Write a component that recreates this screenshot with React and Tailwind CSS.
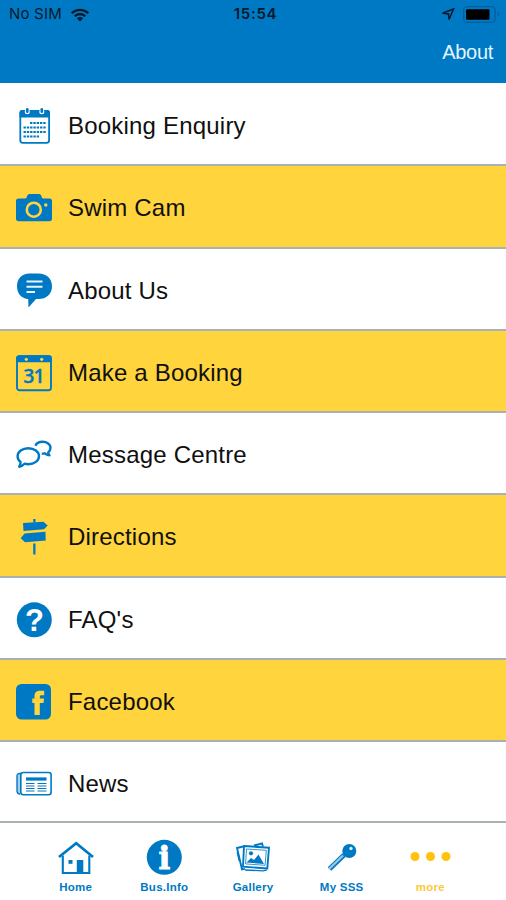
import React from "react";

const BLUE = "#0079c4";

const CalendarIcon = () => (
  <svg width="36" height="36" viewBox="0 0 36 36">
    <rect x="4.3" y="3" width="28.8" height="31.800" rx="2.500" fill="#fff" stroke={BLUE} strokeWidth="1.800" />
    <path d="M3.500 9.500V4.500a2.500 2.500 0 0 1 2.500-2.500h25.500a2.500 2.500 0 0 1 2.500 2.500v5z" fill={BLUE} />
    {[11.300, 25.800].map((x) => (
      <g key={x}>
        <circle cx={x} cy="3.800" r="2.500" fill="#fff" />
        <rect x={x - 1.300} y="0" width="2.600" height="5" rx="1.300" fill={BLUE} />
      </g>
    ))}
    <g stroke={BLUE} strokeWidth="2.200" strokeDasharray="2.400 0.900">
      <path d="M14 15h16" />
      <path d="M7.500 19.500h22.500" />
      <path d="M7.500 24h22.500" />
      <path d="M7.500 28.500h16" />
    </g>
  </svg>
);

const CameraIcon = () => (
  <svg width="36" height="36" viewBox="0 0 36 36" fill={BLUE}>
    <path d="M2.500 8.500H9q1.500 0 1.800-1.500l.5-1.500Q11.800 4 13.500 4h9.500q1.700 0 2.200 1.500l.5 1.500q.3 1.500 1.800 1.500h6Q36 8.500 36 11v17.500q0 2.800-2.500 2.800h-31Q0 31.300 0 28.500V11Q0 8.500 2.500 8.500z" />
    <circle cx="17.800" cy="19.700" r="7" fill="none" stroke="#ffd43c" strokeWidth="2.600" />
    <circle cx="29.800" cy="15" r="1.700" fill="#ffd43c" />
  </svg>
);

const BubbleIcon = () => (
  <svg width="36" height="36" viewBox="0 0 36 36">
    <path
      d="M13.500 .500h9C30.500.500 36 5.500 36 13.200S30.500 26 22.500 26H20L12.500 34.500l-.3-8.500C5.500 25.500 1 20.500 1 13.200 1 5.500 6 .5 13.500.5z"
      fill={BLUE}
    />
    <path d="M10.500 8.500h16M10.500 13.700h16M10.500 19h8.500" stroke="#e8f4fc" strokeWidth="2" />
  </svg>
);

const BookingIcon = () => (
  <svg width="36" height="36" viewBox="0 0 36 36" className="overflow-visible">
    <rect x="1" y="1.200" width="34" height="34" rx="2.500" fill="none" stroke={BLUE} strokeWidth="1.900" />
    <path d="M.2 7.200V3Q.2.300 3 .300h30Q35.800.300 35.800 3v4.200z" fill={BLUE} />
    <circle cx="10.300" cy="4.300" r="1.600" fill="#ffd43c" />
    <circle cx="25.700" cy="4.300" r="1.600" fill="#ffd43c" />
    <text
      x="17.500"
      y="28"
      textAnchor="middle"
      fill={BLUE}
      stroke={BLUE}
      strokeWidth="0.300"
      className="font-['Open_Sans',sans-serif] text-[19.500px] font-semibold tracking-[-1px]"
    >
      31
    </text>
  </svg>
);

const ChatIcon = () => (
  <svg width="36" height="36" viewBox="0 0 36 36" fill="none" stroke={BLUE} strokeWidth="2.400" strokeLinejoin="round">
    <path d="M12.300 11.200c6 0 10.700 3.600 10.700 8s-4.700 8-10.700 8c-1.400 0-2.600-.2-3.800-.5-1.300 1.500-3 2.700-5.300 3 .9-1.400 1.500-3.300 1.300-4.700C2.600 23.500 1.600 21.500 1.600 19.200c0-4.400 4.700-8 10.700-8z" />
    <path d="M19.500 8.700c1-2.500 3.700-3.900 7-3.900 4.500 0 8 2.500 8 6 0 1.900-.9 3.500-2.300 4.600.1 1.200.5 2 1.300 3-2-.2-3.500-.9-4.600-2.100-1 .3-2 .4-3.200.3" />
  </svg>
);

const SignpostIcon = () => (
  <svg width="36" height="36" viewBox="0 0 36 36" fill={BLUE}>
    <path d="M17.200 0h2.300v3.500h-2.300zM17.200 24.500h2.300V35.500h-2.300z" />
    <path d="M7 4l20.500-1.200 4.200 3.700L28 10.300 7.500 12z" />
    <path d="M29.500 12.800l.2 8.700L9 23.300l-4.300-4 3.800-4.800z" />
  </svg>
);

const QuestionIcon = () => (
  <svg width="36" height="36" viewBox="0 0 36 36" className="overflow-visible">
    <circle cx="18.300" cy="17.800" r="17.500" fill={BLUE} />
    <text
      x="18.500"
      y="28.800"
      textAnchor="middle"
      fill="#fff"
      className="font-['Liberation_Sans',sans-serif] text-[31px] font-bold"
    >
      ?
    </text>
  </svg>
);

const FacebookIcon = () => (
  <svg width="36" height="36" viewBox="0 0 36 36">
    <rect y="0" width="35" height="35.500" rx="5.500" fill={BLUE} />
    <path
      d="M18.500 31V19h-2.200v-4.500h2.200v-2.200c0-4 2-5.600 5.700-5.600h4v4.500h-2.500c-1.500 0-1.900.6-1.900 1.900v1.400h4.300l-.6 4.500h-3.700v12z"
      fill="#ffd43c"
    />
  </svg>
);

const NewsIcon = () => (
  <svg width="36" height="36" viewBox="0 0 36 36" fill="none" stroke={BLUE}>
    <path d="M5 7.500H3.500Q1 7.500 1 10v14.500q0 3.500 3 3.500" fill="#a9cdea" strokeWidth="1.400" />
    <rect x="4.800" y="6.500" width="30.300" height="22.300" rx="2.500" fill="#fff" strokeWidth="1.600" />
    <path d="M10 13h20.500" strokeWidth="3.200" />
    <path
      d="M10 17.500h8.500M21.500 17.500h9M10 20h8.500M21.500 20h9M10 22.500h8.500M21.500 22.500h9M10 25h8.500M21.500 25h9"
      strokeWidth="1"
    />
  </svg>
);

const HomeIcon = () => (
  <svg width="36" height="36" viewBox="0 0 36 36" fill="none" stroke={BLUE}>
    <path d="M4.800 15.500v17.500h26.500v-17.500" strokeWidth="2.100" />
    <path d="M1 17L18.200 3.300 35 17" strokeWidth="2.700" />
    <rect x="10.500" y="20" width="4" height="3.800" fill={BLUE} stroke="none" />
    <rect x="18.800" y="20" width="6.500" height="13" fill={BLUE} stroke="none" />
  </svg>
);

const InfoIcon = () => (
  <svg width="36" height="36" viewBox="0 0 36 36" className="overflow-visible">
    <circle cx="18.300" cy="17.300" r="17.500" fill={BLUE} />
    <text
      x="18.500"
      y="29"
      textAnchor="middle"
      fill="#fff"
      stroke="#fff"
      strokeWidth="0.900"
      className="font-['DejaVu_Serif',serif] text-[31px] font-bold"
    >
      i
    </text>
  </svg>
);

const GalleryIcon = () => (
  <svg width="36" height="36" viewBox="0 0 36 36" fill="none" stroke={BLUE} strokeWidth="1.900">
    <path d="M8 6.500l-6 1.500 5 21.500 3-.6" />
    <path d="M19 5.500l8-2 1 3M4.500 21l-2-9" />
    <path d="M9 6l25 1.700-1.700 20.800-24.300-1.800z" fill="#fff" />
    <path d="M11.500 9l19.800 1.300-1.200 15-19.500-1.400z" strokeWidth=".8" />
    <path d="M11.500 22.500l4.500-4.500 3 2 4.500-5.500 5.500 9.500z" fill={BLUE} stroke="none" />
    <circle cx="16" cy="13.300" r="2.100" fill={BLUE} stroke="none" />
    <path d="M10 30l18 .8 4-1" strokeWidth="1.300" />
  </svg>
);

const KeyIcon = () => (
  <svg width="36" height="36" viewBox="0 0 36 36">
    <path d="M20 15L5.500 29" stroke={BLUE} strokeWidth="5" />
    <path d="M19 15.500L5 29" stroke="#9cc6e6" strokeWidth="2.200" />
    <circle cx="25.300" cy="11" r="7" fill={BLUE} />
    <circle cx="27" cy="8.500" r="1.700" fill="#d9ecf8" />
  </svg>
);

const MoreIcon = () => (
  <svg width="42" height="36" viewBox="0 0 42 36" fill="#ffc20e">
    <circle cx="6" cy="16.500" r="4.500" />
    <circle cx="21.500" cy="16.500" r="4.500" />
    <circle cx="37" cy="16.500" r="4.500" />
  </svg>
);

const menuItems = [
  { label: "Booking Enquiry", icon: CalendarIcon },
  { label: "Swim Cam", icon: CameraIcon },
  { label: "About Us", icon: BubbleIcon },
  { label: "Make a Booking", icon: BookingIcon },
  { label: "Message Centre", icon: ChatIcon },
  { label: "Directions", icon: SignpostIcon },
  { label: "FAQ's", icon: QuestionIcon },
  { label: "Facebook", icon: FacebookIcon },
  { label: "News", icon: NewsIcon },
];

const tabs = [
  { label: "Home", icon: HomeIcon },
  { label: "Bus.Info", icon: InfoIcon },
  { label: "Gallery", icon: GalleryIcon },
  { label: "My SSS", icon: KeyIcon },
  { label: "more", icon: MoreIcon, active: true },
];

const StatusBar = () => (
  <div className="grid h-[29px] grid-cols-3 items-center pl-[9px] pr-[6px] font-['Inter',sans-serif] text-[#03192b]">
    <div className="flex items-center gap-[9px]">
      <span className="text-[15px] tracking-[0.2px]">No SIM</span>
      <svg width="18" height="14" viewBox="0 0 18 14" fill="none" stroke="currentColor" strokeWidth="2.300">
        <path d="M.8 5.200a11.600 11.600 0 0 1 16.400 0" />
        <path d="M3.800 8.300a7.400 7.400 0 0 1 10.400 0" />
        <path d="M9 13.500L5.900 10.400a4.400 4.400 0 0 1 6.200 0z" fill="currentColor" stroke="none" />
      </svg>
    </div>
    <span className="pl-[2px] text-center text-[15px] font-semibold tracking-[0.7px]">15:54</span>
    <div className="flex items-center justify-end gap-[8px]">
      <svg width="14" height="13" viewBox="0 0 14 13" fill="none" stroke="currentColor" strokeWidth="1.500">
        <path d="M12.500 1L1.500 5.300l6 .7.500 5.500z" />
      </svg>
      <svg width="37" height="17" viewBox="0 0 37 17">
        <rect x=".7" y=".7" width="31.500" height="15.600" rx="3.500" fill="none" stroke="#075f98" strokeWidth="1.300" />
        <rect x="3" y="3.300" width="23.500" height="10.400" rx="1" fill="#000" />
        <path d="M34.500 6v5q2-.8 2-2.500t-2-2.500z" fill="#075f98" />
      </svg>
    </div>
  </div>
);

const App = () => {
  return (
    <div className="flex h-[900px] w-[506px] flex-col overflow-hidden bg-white font-['Liberation_Sans',Arial,sans-serif]">
      <header className="h-[83px] shrink-0 bg-[#0079c4]">
        <StatusBar />
        <div className="flex h-[46px] items-center justify-end pr-[13px]">
          <span className="text-[20px] tracking-[-0.3px] text-[#e3f4ff]">About</span>
        </div>
      </header>

      <ul className="shrink-0 pt-px">
        {menuItems.map(({ label, icon: Icon }, index) => (
          <li
            key={label}
            className={`flex h-[82.250px] items-center gap-4 border-b-2 border-[#a9b1b5] pl-4 pt-1 last:h-[81.250px] ${
              index % 2 ? "bg-[#ffd43c]" : "bg-white"
            }`}
          >
            <Icon />
            <span className="text-2xl tracking-[0.2px] text-[#101010]">{label}</span>
          </li>
        ))}
      </ul>

      <nav className="flex grow justify-center pt-[17px]">
        {tabs.map(({ label, icon: Icon, active }) => (
          <div key={label} className="flex w-[88.700px] flex-col items-center gap-[4px]">
            <Icon />
            <span
              className={`text-[11.500px] leading-[14px] font-bold tracking-[0.25px] ${
                active ? "text-[#ffc83a]" : "text-[#0079c4]"
              }`}
            >
              {label}
            </span>
          </div>
        ))}
      </nav>
    </div>
  );
};

export default App;
